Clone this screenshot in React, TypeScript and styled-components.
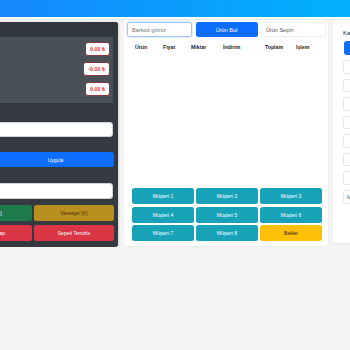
import React from 'react';
import styled, { createGlobalStyle } from 'styled-components';

const GlobalStyle = createGlobalStyle`
  html, body {
    margin: 0;
    padding: 0;
    overflow: hidden;
    background: #f4f4f4;
  }
  body {
    font-family: "Liberation Sans", Arial, sans-serif;
    color: #212529;
  }
  * { box-sizing: border-box; }
`;

const TopBar = styled.header`
  height: 19px;
  background: linear-gradient(90deg, #1488fc, #02b1fd);
  border-bottom: 2px solid #fff;
  box-shadow: 0 1px 2px rgba(0, 0, 0, 0.06);
`;

const Workspace = styled.main`
  display: flex;
  align-items: flex-start;
  gap: 5px;
  padding-top: 1px;
`;

/* ---------- left: cart summary ---------- */

const SummaryPanel = styled.section`
  flex-shrink: 0;
  width: 170px;
  height: 225px;
  margin: 2px 1px 0 -52px;
  background: #343a40;
  border-radius: 3px;
  box-shadow: 0 1px 3px rgba(0, 0, 0, 0.25);
  display: flex;
  flex-direction: column;
`;

const PanelHeader = styled.div`
  height: 15px;
  background: #32373d;
  border-radius: 3px 3px 0 0;
`;

const PanelBody = styled.div`
  padding: 0 4px 6px 4px;
  display: flex;
  flex-direction: column;
`;

const TotalsBlock = styled.div`
  margin-right: 1px;
  padding: 4.5px 3px 7px;
  background: #495057;
  display: flex;
  flex-direction: column;
  align-items: flex-end;
  gap: 5.5px;
`;

const AmountBadge = styled.span`
  height: 14.5px;
  padding: 0 4px;
  display: flex;
  align-items: center;
  background: #fff;
  color: #dc3545;
  border: 1px solid #8a3a40;
  border-radius: 3px;
  font-size: 5.4px;
  font-weight: 700;
`;

const FieldInput = styled.input<{ $gap: number; $h: number }>`
  display: block;
  margin: ${p => p.$gap}px 1px 0 45px;
  height: ${p => p.$h}px;
  padding: 0 4px;
  background: #fff;
  border: 1px solid #ced4da;
  border-radius: 3px;
  font: inherit;
  font-size: 5.5px;
  outline: none;
`;

const Btn = styled.button<{ $tone: 'primary' | 'success' | 'warning' | 'danger' | 'info' | 'amber' }>`
  height: 100%;
  padding: 0;
  border: none;
  border-radius: 2.5px;
  font-family: inherit;
  font-size: 5px;
  white-space: nowrap;
  display: flex;
  align-items: center;
  justify-content: center;
  color: ${p => (p.$tone === 'warning' ? '#212529' : p.$tone === 'amber' ? '#3b2f05' : '#fff')};
  background: ${p =>
    p.$tone === 'primary' ? '#0d6efd' :
    p.$tone === 'success' ? '#1f7a4d' :
    p.$tone === 'amber' ? '#b8901f' :
    p.$tone === 'danger' ? '#dc3545' :
    p.$tone === 'info' ? '#17a2b8' :
    '#ffc107'};
`;

const ApplyRow = styled.div`
  margin: 15px 0 0 45px;
  height: 15px;
  display: flex;
  & > button { flex: 1; }
`;

const ActionGrid = styled.div`
  margin-top: 6px;
  display: grid;
  grid-template-columns: 1fr 1fr;
  grid-auto-rows: 16px;
  gap: 4px 2px;
`;

/* ---------- middle: sale table ---------- */

const SaleCard = styled.section`
  flex-shrink: 0;
  width: 204px;
  height: 226px;
  padding: 2px 2px 5px 3px;
  background: #fff;
  border-radius: 4px;
  box-shadow: 0 1px 2px rgba(0, 0, 0, 0.05);
  display: flex;
  flex-direction: column;
`;

const SearchRow = styled.div`
  height: 15px;
  display: flex;
  gap: 3.5px;
`;

const BarcodeInput = styled.input`
  width: 65px;
  height: 100%;
  padding: 0 4px;
  border: 1px solid #9ec5fe;
  border-radius: 2.5px;
  box-shadow: 0 0 0 1px rgba(13, 110, 253, 0.12);
  font-family: inherit;
  font-size: 5.6px;
  outline: none;
  &::placeholder { color: #6c757d; }
`;

const FindBtn = styled(Btn)`
  width: 62px;
  flex-shrink: 0;
  font-size: 5.5px;
`;

const ProductSelect = styled.div`
  width: 65px;
  height: 100%;
  padding: 0 4px;
  display: flex;
  align-items: center;
  border: 1px solid #eceff2;
  border-radius: 2.5px;
  font-size: 5.5px;
  color: #495057;
`;

const TableHead = styled.div`
  margin-top: 5px;
  height: 10px;
  padding-left: 8px;
  display: grid;
  grid-template-columns: 28px 28px 32px 42px 31px 1fr;
  align-items: center;
  font-size: 5.2px;
  font-weight: 700;
  color: #212529;
`;

const TableBody = styled.div`
  flex: 1;
`;

const CustomerGrid = styled.div`
  padding-left: 5px;
  display: grid;
  grid-template-columns: repeat(3, 62px);
  grid-auto-rows: 16px;
  gap: 2.5px 2px;
`;

/* ---------- right: categories ---------- */

const CategoryCard = styled.aside`
  flex-shrink: 0;
  width: 120px;
  height: 223px;
  padding: 8px 10px;
  background: #fff;
  border-radius: 4px;
  box-shadow: 0 1px 2px rgba(0, 0, 0, 0.05);
  display: flex;
  flex-direction: column;
  gap: 5px;
`;

const CardTitle = styled.div`
  height: 10px;
  display: flex;
  align-items: center;
  font-size: 6px;
  color: #212529;
  margin-bottom: -2px;
`;

const CategoryItem = styled.div<{ $active?: boolean }>`
  height: ${p => (p.$active ? 14 : 13.5)}px;
  margin-left: ${p => (p.$active ? 1 : 0)}px;
  border: 1px solid ${p => (p.$active ? '#0d6efd' : '#e3e6ea')};
  background: ${p => (p.$active ? '#0d6efd' : '#fff')};
  border-radius: 2.5px;
`;

const NoteItem = styled.div`
  height: 14.5px;
  padding-left: 3px;
  display: flex;
  align-items: center;
  border: 1px solid #e3e6ea;
  border-radius: 2.5px;
  font-size: 6px;
  color: #495057;
`;

const customers = [1, 2, 3, 4, 5, 6, 7, 8];
const columns = ['Ürün', 'Fiyat', 'Miktar', 'İndirim', 'Toplam', 'İşlem'];

export default function App() {
  return (
    <>
      <GlobalStyle />
      <TopBar />
      <Workspace>
        <SummaryPanel>
          <PanelHeader />
          <PanelBody>
            <TotalsBlock>
              <AmountBadge>0.00 ₺</AmountBadge>
              <AmountBadge>-0.00 ₺</AmountBadge>
              <AmountBadge>0.00 ₺</AmountBadge>
            </TotalsBlock>
            <FieldInput $gap={19} $h={15} />
            <ApplyRow>
              <Btn $tone="primary">Uygula</Btn>
            </ApplyRow>
            <FieldInput $gap={16} $h={16} />
            <ActionGrid>
              <Btn $tone="success">Nakit (N)</Btn>
              <Btn $tone="amber">Veresiye (V)</Btn>
              <Btn $tone="danger">Ödeme Yap</Btn>
              <Btn $tone="danger">Sepeti Temizle</Btn>
            </ActionGrid>
          </PanelBody>
        </SummaryPanel>

        <SaleCard>
          <SearchRow>
            <BarcodeInput placeholder="Barkod giriniz" />
            <FindBtn $tone="primary">Ürün Bul</FindBtn>
            <ProductSelect>Ürün Seçin</ProductSelect>
          </SearchRow>
          <TableHead>
            {columns.map(c => (
              <span key={c}>{c}</span>
            ))}
          </TableHead>
          <TableBody />
          <CustomerGrid>
            {customers.map(n => (
              <Btn key={n} $tone="info">Müşteri {n}</Btn>
            ))}
            <Btn $tone="warning">Beklet</Btn>
          </CustomerGrid>
        </SaleCard>

        <CategoryCard>
          <CardTitle>Kategoriler</CardTitle>
          <CategoryItem $active />
          {[0, 1, 2, 3, 4, 5, 6].map(i => (
            <CategoryItem key={i} />
          ))}
          <NoteItem>İçecek</NoteItem>
        </CategoryCard>
      </Workspace>
    </>
  );
}
